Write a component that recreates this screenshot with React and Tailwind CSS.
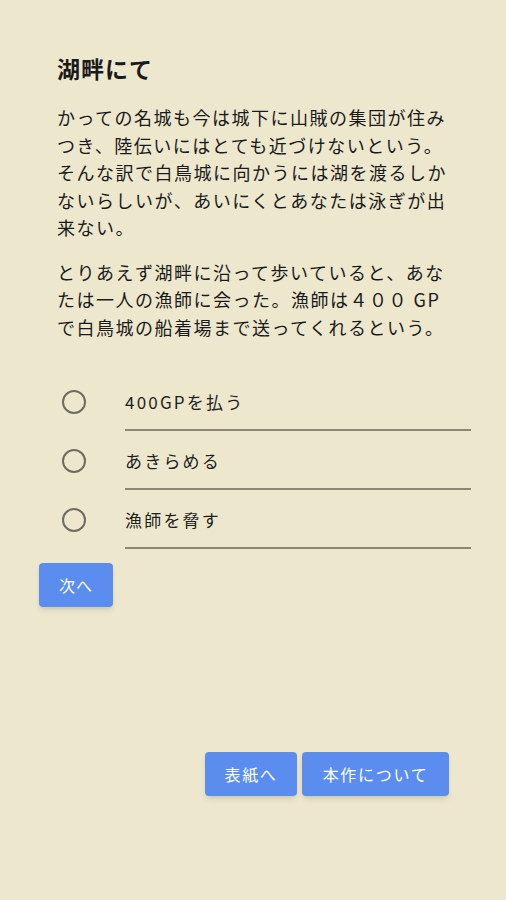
import React from "react";

const font = { fontFamily: '"Noto Sans CJK JP", "Noto Sans", sans-serif' };

function Option({ label }) {
  return (
    <div className="flex items-start">
      <div className="mt-[18px] w-[24px] h-[24px] rounded-full border-2 border-[#6e6c62] shrink-0" />
      <div className="ml-[39px] flex-1 pt-[18px] pb-[15px] border-b-2 border-[#8c8773]">
        <div className="text-[17px] leading-[24px] tracking-[2.2px] text-[#1e1e1e]">{label}</div>
      </div>
    </div>
  );
}

export default function App() {
  return (
    <div className="min-h-[900px] bg-[#ede8cd] text-[#1a1a1a]" style={font}>
      <div className="pl-[57px] pt-[52px] w-[470px]">
        <h1 className="text-[23px] leading-[32px] font-bold tracking-[1px]">湖畔にて</h1>
        <p className="mt-[20px] text-[18px] leading-[27.5px] tracking-[1.5px] whitespace-nowrap">
          かっての名城も今は城下に山賊の集団が住み<br />
          つき、陸伝いにはとても近づけないという。<br />
          そんな訳で白鳥城に向かうには湖を渡るしか<br />
          ないらしいが、あいにくとあなたは泳ぎが出<br />
          来ない。
        </p>
        <p className="mt-[17px] text-[18px] leading-[27.5px] tracking-[1.5px] whitespace-nowrap">
          とりあえず湖畔に沿って歩いていると、あな<br />
          たは一人の漁師に会った。漁師は４００ GP<br />
          で白鳥城の船着場まで送ってくれるという。
        </p>
      </div>
      <div className="mt-[31px] pl-[62px] pr-[35px] flex flex-col">
        <Option label="400GPを払う" />
        <Option label="あきらめる" />
        <Option label="漁師を脅す" />
      </div>
      <div className="pl-[39px] mt-[14px]">
        <button className="w-[74px] h-[44px] rounded-[4px] bg-[#5b8def] text-white text-[16px] tracking-[1px] shadow-md">
          次へ
        </button>
      </div>
      <div className="mt-[145px] flex justify-end gap-[5px] pr-[57px]">
        <button className="w-[92px] h-[44px] rounded-[4px] bg-[#5b8def] text-white text-[16px] tracking-[1.7px] shadow-md">
          表紙へ
        </button>
        <button className="w-[147px] h-[44px] rounded-[4px] bg-[#5b8def] text-white text-[16px] tracking-[1.7px] shadow-md">
          本作について
        </button>
      </div>
    </div>
  );
}
